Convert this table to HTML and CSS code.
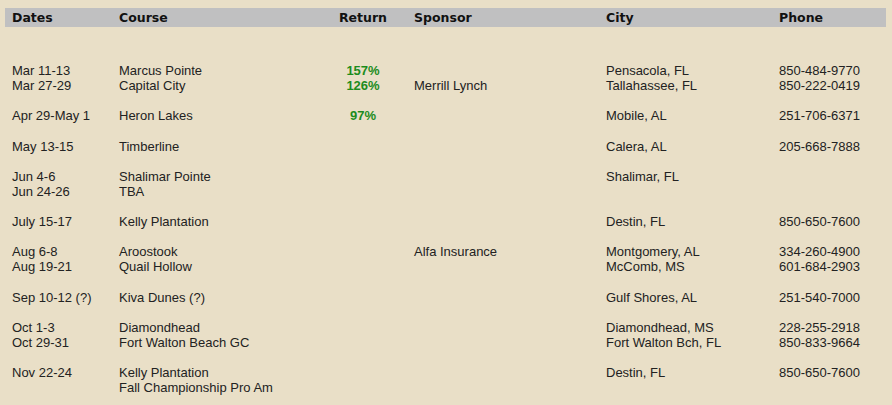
FILE: index.html
```html
<!DOCTYPE html>
<html>
<head>
<meta charset="utf-8">
<link rel="stylesheet" href="styles.css">
</head>
<body>
<div class="schedule">
  <div class="row head">
    <div>Dates</div><div>Course</div><div class="ret">Return</div><div class="sp">Sponsor</div><div>City</div><div>Phone</div>
  </div>
  <div class="body">
    <div class="row">
      <div>Mar 11-13<br>Mar 27-29</div>
      <div>Marcus Pointe<br>Capital City</div>
      <div class="ret pct">157%<br>126%</div>
      <div class="sp"><br>Merrill Lynch</div>
      <div>Pensacola, FL<br>Tallahassee, FL</div>
      <div>850-484-9770<br>850-222-0419</div>
    </div>
    <div class="row">
      <div>Apr 29-May 1</div>
      <div>Heron Lakes</div>
      <div class="ret pct">97%</div>
      <div class="sp"></div>
      <div>Mobile, AL</div>
      <div>251-706-6371</div>
    </div>
    <div class="row">
      <div>May 13-15</div>
      <div>Timberline</div>
      <div class="ret pct"></div>
      <div class="sp"></div>
      <div>Calera, AL</div>
      <div>205-668-7888</div>
    </div>
    <div class="row">
      <div>Jun 4-6<br>Jun 24-26</div>
      <div>Shalimar Pointe<br>TBA</div>
      <div class="ret pct"></div>
      <div class="sp"></div>
      <div>Shalimar, FL</div>
      <div></div>
    </div>
    <div class="row">
      <div>July 15-17</div>
      <div>Kelly Plantation</div>
      <div class="ret pct"></div>
      <div class="sp"></div>
      <div>Destin, FL</div>
      <div>850-650-7600</div>
    </div>
    <div class="row">
      <div>Aug 6-8<br>Aug 19-21</div>
      <div>Aroostook<br>Quail Hollow</div>
      <div class="ret pct"></div>
      <div class="sp">Alfa Insurance</div>
      <div>Montgomery, AL<br>McComb, MS</div>
      <div>334-260-4900<br>601-684-2903</div>
    </div>
    <div class="row">
      <div>Sep 10-12 (?)</div>
      <div>Kiva Dunes (?)</div>
      <div class="ret pct"></div>
      <div class="sp"></div>
      <div>Gulf Shores, AL</div>
      <div>251-540-7000</div>
    </div>
    <div class="row">
      <div>Oct 1-3<br>Oct 29-31</div>
      <div>Diamondhead<br>Fort Walton Beach GC</div>
      <div class="ret pct"></div>
      <div class="sp"></div>
      <div>Diamondhead, MS<br>Fort Walton Bch, FL</div>
      <div>228-255-2918<br>850-833-9664</div>
    </div>
    <div class="row">
      <div>Nov 22-24</div>
      <div>Kelly Plantation<br>Fall Championship Pro Am</div>
      <div class="ret pct"></div>
      <div class="sp"></div>
      <div>Destin, FL</div>
      <div>850-650-7600</div>
    </div>
  </div>
</div>
</body>
</html>
```
FILE: styles.css
```css
html, body {
  margin: 0;
  padding: 0;
  background: #e9dfc7;
}
body {
  font-family: "Liberation Sans", Arial, sans-serif;
  font-size: 13px;
  line-height: 15px;
  color: #222;
}
.schedule {
  margin: 8px 0 0 5px;
  width: 881px;
}
.row {
  display: grid;
  grid-template-columns: 107px 207px 74px 206px 173px 1fr;
  padding-left: 7px;
}
.head {
  background: #c0c0c1;
  height: 19px;
  font-family: "DejaVu Sans", Verdana, sans-serif;
  font-weight: bold;
  font-size: 12.5px;
  line-height: 19px;
  color: #111;
}
.body {
  padding-top: 36px;
}
.body .row {
  padding-bottom: 15.25px;
}
.ret {
  text-align: center;
}
.sp {
  padding-left: 14px;
}
.pct {
  color: #1c8c1c;
  font-weight: bold;
}
```
